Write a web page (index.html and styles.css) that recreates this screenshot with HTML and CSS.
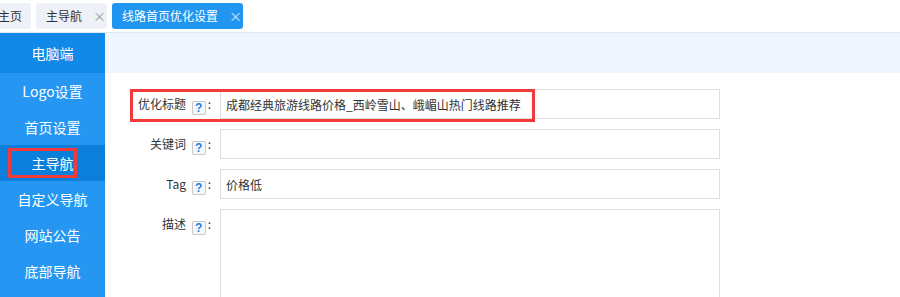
FILE: index.html
```html
<!DOCTYPE html>
<html lang="zh-CN">
<head>
    <meta charset="UTF-8">
    <title>线路首页优化设置</title>
    <link rel="stylesheet" href="styles.css">
</head>
<body>

<div class="tabs">
    <div class="tab tab-home">主页</div>
    <div class="tab">主导航<span class="close">×</span></div>
    <div class="tab active">线路首页优化设置<span class="close">×</span></div>
</div>

<div class="main">
    <div class="sidebar">
        <div class="side-title">电脑端</div>
        <div class="side-item">Logo设置</div>
        <div class="side-item">首页设置</div>
        <div class="side-item current">主导航</div>
        <div class="side-item">自定义导航</div>
        <div class="side-item">网站公告</div>
        <div class="side-item">底部导航</div>
        <div class="mark mark-side"></div>
    </div>

    <div class="content">
        <div class="content-head"></div>
        <div class="form">
            <div class="row">
                <label class="label">优化标题 <span class="help">?</span>:</label>
                <input class="field" type="text" value="成都经典旅游线路价格_西岭雪山、峨嵋山热门线路推荐">
            </div>
            <div class="row">
                <label class="label">关键词 <span class="help">?</span>:</label>
                <input class="field" type="text" value="">
            </div>
            <div class="row">
                <label class="label">Tag <span class="help">?</span>:</label>
                <input class="field" type="text" value="价格低">
            </div>
            <div class="row">
                <label class="label">描述 <span class="help">?</span>:</label>
                <textarea class="field area"></textarea>
            </div>
        </div>
        <div class="mark mark-title"></div>
    </div>
</div>

</body>
</html>
```

FILE: styles.css
```css
* {
    box-sizing: border-box;
    margin: 0;
    padding: 0;
    font-family: "Microsoft YaHei", "Noto Sans CJK SC", sans-serif;
}

body {
    background: #fff;
    color: #333;
    height: 297px;
    overflow: hidden;
}

.tabs {
    display: flex;
    align-items: center;
    gap: 5px;
    height: 33px;
    border-bottom: 1px solid #dde9f6;
    overflow: hidden;
}

.tab {
    height: 26px;
    line-height: 26px;
    padding: 0 6px 0 10px;
    background: #eef1f8;
    border-radius: 3px;
    font-size: 12px;
    color: #333;
    white-space: nowrap;
}

.tab-home {
    margin-left: -12px;
    padding-right: 9px;
}

.tab .close {
    display: inline-block;
    width: 8px;
    margin-left: 11px;
    color: #999;
    font-size: 13px;
    text-align: center;
}

.tab.active {
    background: #2196f0;
    color: #fff;
}

.tab.active .close {
    color: #dcecfb;
}

.main {
    display: flex;
    height: 264px;
}

.sidebar {
    position: relative;
    width: 105px;
    background: #2597f2;
    color: #fff;
    font-size: 14px;
    text-align: center;
}

.side-title {
    height: 40px;
    line-height: 40px;
    background: #1089e8;
}

.side-item {
    height: 36px;
    line-height: 36px;
}

.side-item.current {
    background: #0b7fda;
}

.content {
    position: relative;
    flex: 1;
}

.content-head {
    height: 40px;
    background: #eff6fe;
}

.form {
    padding-top: 16px;
    display: flex;
    flex-direction: column;
    gap: 10px;
}

.row {
    display: flex;
    align-items: flex-start;
}

.label {
    width: 115px;
    padding-right: 9px;
    line-height: 30px;
    text-align: right;
    font-size: 12px;
    color: #333;
}

.help {
    display: inline-block;
    width: 14px;
    height: 14px;
    line-height: 12px;
    margin: 0 2px 0 3px;
    border: 1px solid #c9c9c9;
    border-radius: 2px;
    background: #f4f6f8;
    color: #1787e0;
    font-family: Arial, "Liberation Sans", sans-serif;
    font-size: 12px;
    font-weight: bold;
    text-align: center;
    vertical-align: -3px;
}

.field {
    width: 500px;
    height: 30px;
    padding: 0 5px;
    border: 1px solid #dedede;
    font-size: 12px;
    color: #333;
    outline: none;
}

.area {
    height: 100px;
    resize: none;
}

.mark {
    position: absolute;
    border: 3px solid #f23a3a;
}

.mark-side {
    left: 8px;
    top: 115px;
    width: 69px;
    height: 30px;
}

.mark-title {
    left: 25px;
    top: 56px;
    width: 405px;
    height: 33px;
}
```
